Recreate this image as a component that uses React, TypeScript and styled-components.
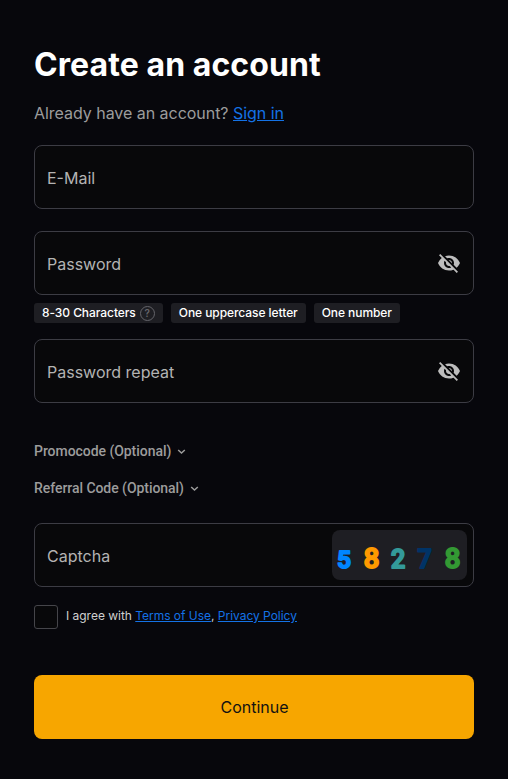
import React, { useState } from "react";
import styled, { createGlobalStyle } from "styled-components";
import { MdVisibilityOff } from "react-icons/md";

const GlobalStyle = createGlobalStyle`
  *, *::before, *::after { box-sizing: border-box; }
  body { margin: 0; background: #07070c; font-family: Inter, sans-serif; }
`;

const Page = styled.main`
  display: flex;
  flex-direction: column;
  width: 508px;
  height: 779px;
  padding: 45px 34px 40px;
  background: #07070c;
`;

const Title = styled.h1`
  margin: 0;
  font-size: 32px;
  line-height: 40px;
  font-weight: 700;
  letter-spacing: 0.08px;
  color: #fff;
`;

const Subtitle = styled.p`
  margin: 16px 0 0;
  height: 24px;
  font-size: 16px;
  line-height: 24px;
  letter-spacing: -0.035px;
  color: #9c9c9c;
`;

const Link = styled.a`
  color: #1472e6;
  text-decoration: underline;
`;

const Field = styled.label<{ $gap: number; $end?: number }>`
  display: flex;
  align-items: center;
  flex: none;
  height: 64px;
  margin-top: ${(p) => p.$gap}px;
  padding: 0 ${(p) => p.$end ?? 12}px 0 12px;
  border: 1px solid #3c3c44;
  border-radius: 8px;
  background: #08080a;
`;

const Input = styled.input`
  flex: 1;
  min-width: 0;
  height: 24px;
  padding: 2px 0 0;
  border: 0;
  outline: 0;
  background: transparent;
  color: #fff;
  font: 400 16px/22px Inter, sans-serif;
  &::placeholder { color: #b3b3b3; opacity: 1; }
`;

const IconButton = styled.button`
  display: flex;
  padding: 0;
  border: 0;
  background: none;
  color: #bdbdbd;
`;

const Rules = styled.div`
  display: flex;
  gap: 8px;
  margin-top: 8px;
`;

const Rule = styled.span`
  display: flex;
  align-items: center;
  gap: 4px;
  height: 20px;
  padding: 0 8px;
  border-radius: 3px;
  background: #1e1e23;
  color: #fff;
  font-size: 12px;
  line-height: 20px;
  font-weight: 500;
  letter-spacing: -0.065px;
  white-space: nowrap;
`;

const Help = styled.span`
  display: flex;
  align-items: center;
  justify-content: center;
  width: 15px;
  height: 15px;
  margin-top: 1px;
  border: 1px solid #65656b;
  border-radius: 50%;
  color: #65656b;
  font-size: 10px;
  line-height: 13px;
  font-weight: 600;
`;

const Toggles = styled.div`
  display: flex;
  flex-direction: column;
  align-items: flex-start;
  gap: 17px;
  margin-top: 38px;
`;

const Toggle = styled.button`
  display: flex;
  align-items: center;
  gap: 6px;
  height: 20px;
  padding: 0;
  border: 0;
  background: none;
  color: #9c9c9c;
  font: 500 14px/20px Roboto, sans-serif;
  letter-spacing: -0.05px;
`;

const CaptchaImage = styled.svg`
  flex: none;
  width: 135px;
  height: 50px;
  border-radius: 8px;
  background: #1e1e23;
`;

const Digit = styled.text`
  font-family: Roboto, sans-serif;
  font-weight: 500;
  stroke-width: 2px;
  stroke-linejoin: round;
`;

const Agreement = styled.div`
  display: flex;
  align-items: flex-start;
  gap: 8px;
  margin-top: 18px;
  color: #d0d0d0;
  font-size: 12px;
  line-height: 22px;
  letter-spacing: -0.02px;
`;

const Checkbox = styled.input`
  appearance: none;
  width: 24px;
  height: 24px;
  margin: 0;
  border: 1px solid #45454a;
  border-radius: 3px;
  background: #08080a;
`;

const Submit = styled.button`
  flex: none;
  height: 64px;
  margin-top: 46px;
  padding: 0 0 0 1px;
  border: 0;
  border-radius: 8px;
  background: #f7a600;
  color: #121212;
  font: 400 16px/24px Inter, sans-serif;
`;

const digits = [
  { value: "5", x: 12, y: 37.7, size: 24.5, color: "#0086ff" },
  { value: "8", x: 39.5, y: 37.7, size: 27.5, color: "#ff9900" },
  { value: "2", x: 66, y: 37.7, size: 25, color: "#339999" },
  { value: "7", x: 92.5, y: 37.7, size: 25, color: "#003366" },
  { value: "8", x: 120.5, y: 37.7, size: 27.5, color: "#339933" },
];

function PasswordField({ label, gap }: { label: string; gap: number }) {
  const [visible, setVisible] = useState(false);
  return (
    <Field $gap={gap}>
      <Input type={visible ? "text" : "password"} placeholder={label} />
      <IconButton type="button" aria-label="Toggle visibility" onClick={() => setVisible(!visible)}>
        <MdVisibilityOff size={24} />
      </IconButton>
    </Field>
  );
}

function OptionalToggle({ label }: { label: string }) {
  return (
    <Toggle type="button">
      {label}
      <svg width="9" height="8" viewBox="0 0 9 8" fill="none" stroke="currentColor" strokeWidth="1.5">
        <path d="M1.2 3l3.3 3L7.8 3" />
      </svg>
    </Toggle>
  );
}

export default function App() {
  return (
    <>
      <GlobalStyle />
      <Page>
        <Title>Create an account</Title>
        <Subtitle>
          Already have an account? <Link>Sign in</Link>
        </Subtitle>
        <Field $gap={20}>
          <Input type="email" placeholder="E-Mail" />
        </Field>
        <PasswordField label="Password" gap={22} />
        <Rules>
          <Rule>
            8-30 Characters <Help>?</Help>
          </Rule>
          <Rule>One uppercase letter</Rule>
          <Rule>One number</Rule>
        </Rules>
        <PasswordField label="Password repeat" gap={16} />
        <Toggles>
          <OptionalToggle label="Promocode (Optional)" />
          <OptionalToggle label="Referral Code (Optional)" />
        </Toggles>
        <Field $gap={25} $end={6}>
          <Input placeholder="Captcha" />
          <CaptchaImage viewBox="0 0 135 50">
            {digits.map((d) => (
              <Digit key={d.x} x={d.x} y={d.y} fontSize={d.size} fill={d.color} stroke={d.color} textAnchor="middle">
                {d.value}
              </Digit>
            ))}
          </CaptchaImage>
        </Field>
        <Agreement>
          <Checkbox type="checkbox" aria-label="Agree" />
          <span>
            I agree with <Link>Terms of Use</Link>, <Link>Privacy Policy</Link>
          </span>
        </Agreement>
        <Submit type="submit">Continue</Submit>
      </Page>
    </>
  );
}
